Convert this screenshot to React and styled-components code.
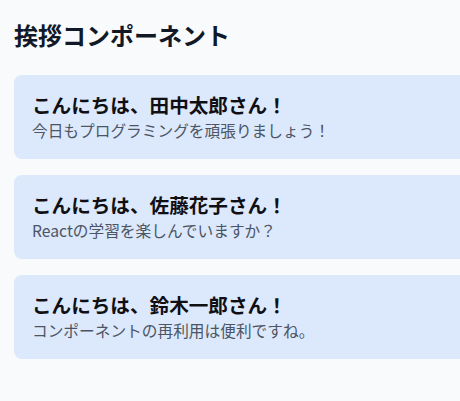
import React from 'react'
import styled, { createGlobalStyle } from 'styled-components'

const GlobalStyle = createGlobalStyle`
  html, body {
    margin: 0;
    padding: 0;
    background: #f9fafb;
    overflow: hidden;
  }
  body {
    font-family: "Noto Sans CJK JP", "Noto Sans", sans-serif;
  }
`

const Page = styled.div`
  padding: 19px 0 0 14px;
  width: 480px;
  min-height: 401px;
  box-sizing: border-box;
`

const Title = styled.h1`
  margin: 0 0 24px;
  font-size: 24px;
  line-height: 32px;
  font-weight: 700;
  color: #111827;
`

const List = styled.div`
  display: flex;
  flex-direction: column;
  gap: 16px;
`

const Card = styled.div`
  background: #dce8fc;
  border-radius: 8px;
  padding: 16px 18px;
`

const Heading = styled.h3`
  margin: 0;
  font-size: 19.6px;
  line-height: 28px;
  font-weight: 700;
  color: #0f0f14;
`

const Message = styled.p`
  margin: 0;
  font-size: 15.7px;
  line-height: 24px;
  color: #4b5563;
`

const greetings = [
  { name: '田中太郎', message: '今日もプログラミングを頑張りましょう！' },
  { name: '佐藤花子', message: 'Reactの学習を楽しんでいますか？' },
  { name: '鈴木一郎', message: 'コンポーネントの再利用は便利ですね。' },
]

const Greeting = ({ name, message }) => (
  <Card>
    <Heading>こんにちは、{name}さん！</Heading>
    <Message>{message}</Message>
  </Card>
)

export default function App() {
  return (
    <>
      <GlobalStyle />
      <Page>
        <Title>挨拶コンポーネント</Title>
        <List>
          {greetings.map((g) => (
            <Greeting key={g.name} name={g.name} message={g.message} />
          ))}
        </List>
      </Page>
    </>
  )
}
